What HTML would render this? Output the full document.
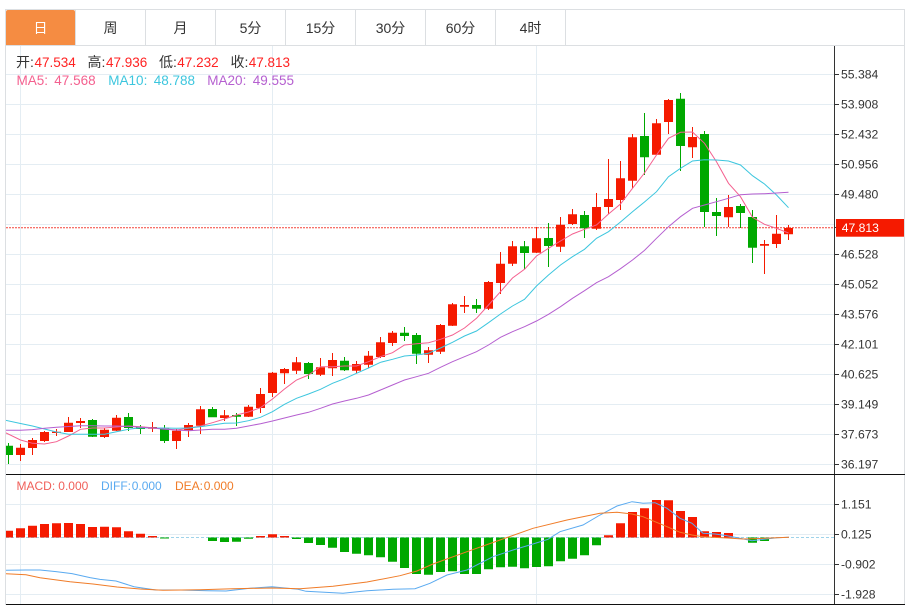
<!DOCTYPE html>
<html><head><meta charset="utf-8"><style>
html,body{margin:0;padding:0;background:#fff;width:910px;height:605px;overflow:hidden}
svg{position:absolute;left:0;top:0;display:block}
text{font-family:"Liberation Sans","Noto Sans CJK SC",sans-serif}
</style></head><body>
<svg width="910" height="605" viewBox="0 0 910 605" xmlns="http://www.w3.org/2000/svg">
<defs><clipPath id="c"><rect x="6" y="46" width="828" height="558"/></clipPath></defs>
<!-- frame -->
<path d="M5.5 605V9.5H904.5V605M6 45.5H904M145.5 10V45M215.5 10V45M285.5 10V45M355.5 10V45M425.5 10V45M495.5 10V45M565.5 10V45M75.5 10V45" fill="none" stroke="#dcdfe2"/>
<path d="M6 45V12a2 2 0 0 1 2-2H73a2 2 0 0 1 2 2V45z" fill="#f58c42"/>
<g font-size="14" fill="#333" text-anchor="middle">
<text x="40.5" y="33" fill="#fff">日</text><text x="110.5" y="33">周</text><text x="180.5" y="33">月</text><text x="250.5" y="33">5分</text><text x="320.5" y="33">15分</text><text x="390.5" y="33">30分</text><text x="460.5" y="33">60分</text><text x="530.5" y="33">4时</text>
</g>
<!-- grid -->
<path d="M6 74.5H834M6 104.5H834M6 134.5H834M6 164.5H834M6 194.5H834M6 224.5H834M6 254.5H834M6 284.5H834M6 314.5H834M6 344.5H834M6 374.5H834M6 404.5H834M6 434.5H834M6 464.5H834M6 504.5H834M6 534.5H834M6 564.5H834M6 594.5H834M20.5 46V604M272.5 46V604M536.5 46V604" fill="none" stroke="#e4edf3"/>
<g clip-path="url(#c)">
<path d="M6 227.7H834" stroke="#f4433a" stroke-width="1" stroke-dasharray="2 1"/>
<path d="M6 537.5H834" stroke="#9fd3ea" stroke-dasharray="3 2"/>
<!-- red wicks -->
<path fill="none" stroke="#f51a00" d="M20.5 444V461M32.5 438V455M44.5 431V442M56.5 429V436M68.5 417V432M80.5 418V428M104.5 428V438M116.5 415V431M152.5 422V432M176.5 429V449M188.5 423V437M200.5 406V434M224.5 410V421M248.5 405V417M260.5 388V413M272.5 372V397M284.5 368V384M296.5 357V374M320.5 358V376M332.5 353V376M356.5 361V373M368.5 351V368M380.5 337V358M392.5 331V346M428.5 347V363M440.5 324V354M452.5 303V326M464.5 296V313M488.5 281V310M500.5 252V294M512.5 241V266M536.5 227V253M560.5 217V252M572.5 209V225M596.5 193V230M608.5 159V214M620.5 161V210M632.5 134V188M656.5 119V155M668.5 99V134M692.5 127V158M728.5 195V227M764.5 240V274M776.5 215V248M788.5 225V240"/>
<!-- green wicks -->
<path fill="none" stroke="#00a800" d="M8.5 443V464M92.5 419V437M128.5 413V431M140.5 425V434M164.5 425V443M212.5 407V417M236.5 413V426M308.5 362V379M344.5 357V371M404.5 327V341M416.5 333V364M476.5 299V313M524.5 241V269M548.5 223V267M584.5 211V238M644.5 113V175M680.5 93V171M704.5 131V227M716.5 198V236M740.5 204V228M752.5 210V263"/>
<!-- red bodies -->
<path fill="#f51a00" d="M16 447.7h9V455h-9zM28 440h9v8h-9zM40 432h9v9h-9zM52 431.7h9v1.3h-9zM64 422.7h9v9.3h-9zM76 421h9v2h-9zM100 429.7h9V437h-9zM112 417.7h9v13h-9zM148 427h9v1.7h-9zM172 430.7h9V441h-9zM184 425h9v5.3h-9zM196 409.3h9v16.4h-9zM220 415.3h9v2.7h-9zM244 406.7h9v10h-9zM256 394h9v14h-9zM268 372.7h9V393h-9zM280 369h9v4.3h-9zM292 362.3h9v8.4h-9zM316 367.3h9v7.4h-9zM328 360h9v8.3h-9zM352 364h9v6.7h-9zM364 355.7h9v9h-9zM376 342.3h9V357h-9zM388 332.7h9V343h-9zM424 350.3h9v4.4h-9zM436 325h9v26.7h-9zM448 304.3h9v21.4h-9zM460 305h9v1.7h-9zM484 282h9v26.7h-9zM496 263.7h9V283h-9zM508 246.3h9v17.4h-9zM532 238.3h9v14.4h-9zM556 224.7h9v22h-9zM568 214.3h9v9.7h-9zM592 207h9v21.7h-9zM604 199h9v8h-9zM616 178.3h9V200h-9zM628 137.3h9v43.4h-9zM652 123.3h9v31.4h-9zM664 100h9v22h-9zM688 137h9v10.3h-9zM724 207h9v10.3h-9zM760 244h9v1.7h-9zM772 233.7h9V244h-9zM784 228h9v6.3h-9z"/>
<!-- green bodies -->
<path fill="#00a800" d="M4 445.7h9V455H4zM88 420h9v16.7h-9zM124 417h9v11h-9zM136 426.7h9v2.3h-9zM160 427.7h9V441h-9zM208 409h9v8.3h-9zM232 415h9v1.7h-9zM304 363h9v11h-9zM340 360.7h9v9.6h-9zM400 332.7h9v3.3h-9zM412 335h9v18.7h-9zM472 305h9v3.7h-9zM520 246.3h9v6.7h-9zM544 238h9v8h-9zM580 215h9v13.3h-9zM640 136h9v21.3h-9zM676 98.7h9V146h-9zM700 134h9v78h-9zM712 212h9v4h-9zM736 206h9v7h-9zM748 217h9v30.7h-9z"/>
<!-- MACD bars -->
<path fill="#f51a00" d="M4 530.7h9v6.8H4zM16 528.3h9v9.2h-9zM28 525.7h9v11.8h-9zM40 524h9v13.5h-9zM52 523.3h9v14.2h-9zM64 523h9v14.5h-9zM76 524h9v13.5h-9zM88 527h9v10.5h-9zM100 526.7h9v10.8h-9zM112 527.3h9v10.2h-9zM124 531.3h9v6.2h-9zM136 533.7h9v3.8h-9zM148 536h9v1.5h-9zM256 536h9v1.5h-9zM268 534.3h9v3.2h-9zM280 536h9v1.5h-9zM604 535.3h9v2.2h-9zM616 523.3h9v14.2h-9zM628 512h9v25.5h-9zM640 508.3h9v29.2h-9zM652 500h9v37.5h-9zM664 500.3h9v37.2h-9zM676 511h9v26.5h-9zM688 517h9v20.5h-9zM700 531.3h9v6.2h-9zM712 532h9v5.5h-9zM724 533h9v4.5h-9z"/>
<path fill="#00a800" d="M160 537.5h9v1h-9zM208 537.5h9V541h-9zM220 537.5h9V542h-9zM232 537.5h9v4.2h-9zM244 537.5h9v1.2h-9zM292 537.5h9V539h-9zM304 537.5h9V543h-9zM316 537.5h9V545h-9zM328 537.5h9v10.2h-9zM340 537.5h9V552h-9zM352 537.5h9v16.2h-9zM364 537.5h9v17.8h-9zM376 537.5h9v19.8h-9zM388 537.5h9v24.2h-9zM400 537.5h9V568h-9zM412 537.5h9V574h-9zM424 537.5h9v37.2h-9zM436 537.5h9V572h-9zM448 537.5h9v33.8h-9zM460 537.5h9V574h-9zM472 537.5h9V574h-9zM484 537.5h9v31.8h-9zM496 537.5h9v29.8h-9zM508 537.5h9v29.2h-9zM520 537.5h9v30.8h-9zM532 537.5h9V567h-9zM544 537.5h9v28.8h-9zM556 537.5h9v23.8h-9zM568 537.5h9v21.2h-9zM580 537.5h9v17.8h-9zM592 537.5h9v7.8h-9zM748 537.5h9v5.2h-9zM760 537.5h9v3.5h-9z"/>
<!-- MA5 -->
<polyline fill="none" stroke="#f4608f" points="4,432 20.5,440 32.5,443.3 44.5,444 56.5,441.7 68.5,436 80.5,429.3 92.5,428 104.5,428 116.5,427 128.5,426 140.5,426.7 152.5,427.7 164.5,428.7 176.5,430 188.5,428.3 200.5,426 212.5,422.7 224.5,419 236.5,415 248.5,412 260.5,407.7 272.5,399 284.5,389 296.5,380 308.5,375 320.5,366.7 332.5,366.7 344.5,366 356.5,366 368.5,361.7 380.5,356.7 392.5,352.7 404.5,345 416.5,343.7 428.5,342.7 440.5,339.3 452.5,335 464.5,328 476.5,318.3 488.5,305 500.5,291.7 512.5,278 524.5,269.3 536.5,256 548.5,248.3 560.5,241 572.5,234 584.5,229.3 596.5,225 608.5,214 620.5,204 632.5,188.3 644.5,173 656.5,155 668.5,138.3 680.5,132.3 692.5,132 704.5,143.3 716.5,161.7 728.5,183.3 740.5,196.7 752.5,217.3 764.5,224.3 776.5,228.3 788.5,233"/>
<!-- MA10 -->
<polyline fill="none" stroke="#3cc6de" points="4,420 20.5,423.5 32.5,426 44.5,429 56.5,432 68.5,434.3 80.5,434.3 92.5,434.3 104.5,434.3 116.5,431.7 128.5,429.3 140.5,427.7 152.5,428 164.5,428 176.5,428.3 188.5,428 200.5,426.7 212.5,425 224.5,423.3 236.5,423 248.5,420.7 260.5,417.3 272.5,411.7 284.5,404.3 296.5,398.3 308.5,394 320.5,389.3 332.5,383.3 344.5,378.7 356.5,373.3 368.5,368 380.5,362.3 392.5,359.3 404.5,356 416.5,355 428.5,353.3 440.5,348 452.5,342.3 464.5,336 476.5,331 488.5,322.7 500.5,314 512.5,306 524.5,299.3 536.5,286 548.5,275 560.5,265 572.5,256.7 584.5,249.3 596.5,238.3 608.5,231.7 620.5,222 632.5,211.7 644.5,202 656.5,191.7 668.5,176.7 680.5,168.3 692.5,161 704.5,159.7 716.5,160 728.5,161 740.5,165 752.5,175.7 764.5,184 776.5,195 788.5,207.7"/>
<!-- MA20 -->
<polyline fill="none" stroke="#b55fd0" points="4,430.3 20.5,430.3 32.5,429.6 44.5,428.3 56.5,427.3 68.5,426.5 80.5,425.7 92.5,425.8 104.5,426 116.5,426 128.5,426.4 140.5,427.3 152.5,428 164.5,429.3 176.5,430 188.5,430.7 200.5,430 212.5,429.3 224.5,429.3 236.5,428.3 248.5,426 260.5,423.7 272.5,421 284.5,418 296.5,415 308.5,412.3 320.5,408.3 332.5,404 344.5,401 356.5,398.3 368.5,395 380.5,390 392.5,385 404.5,380 416.5,376.7 428.5,373.3 440.5,367.3 452.5,361.7 464.5,356.7 476.5,351.7 488.5,345 500.5,337.3 512.5,331.7 524.5,326.7 536.5,321 548.5,314.3 560.5,306.7 572.5,298.3 584.5,290.7 596.5,282.7 608.5,276.7 620.5,268.7 632.5,260 644.5,250.4 656.5,238.3 668.5,226.7 680.5,216.7 692.5,208.3 704.5,205 716.5,201.7 728.5,198.3 740.5,194.7 752.5,194 764.5,193.7 776.5,193 788.5,192.3"/>
<!-- DIFF -->
<polyline fill="none" stroke="#5aaaf0" points="4,570.3 26,570 40,570 56,571.6 72,573.6 90,577.6 100,579.4 116,581 134,586.7 156,590 180,590 208,590.7 226,591 250,588.3 272,586.7 298,589.3 306,591.3 343,593.3 367,590.7 393,589.3 415,588.7 430,583.3 447,575 467,570 493,556.7 513,550 533,544 548,539.3 560,531.7 583,525 600,515 617,506 632,501.7 643,503.3 655,502.7 667,508.3 680,518.3 692,523.3 703,533.3 715,534 727,535.7 740,538.3 752,540.7 764,539.3 777,537.7 789,537.3"/>
<!-- DEA -->
<polyline fill="none" stroke="#f07c28" points="4,573.7 26,574.7 40,577.7 70,581.7 93,584 117,587 140,589 163,590.3 200,589.7 233,588.7 272,588 300,588.7 333,586.3 367,582 400,575.7 417,571 433,564 467,551.7 500,540 533,528.3 567,520 600,513.3 617,512.3 632,514 643,516.7 655,521.7 667,526.7 680,532.3 692,535 703,536.7 727,538 743,539 764,538.3 789,537.3"/>
</g>
<!-- axis -->
<path d="M834.5 46V604" stroke="#333" stroke-width="1" fill="none"/>
<path d="M834 74.5h5M834 104.5h5M834 134.5h5M834 164.5h5M834 194.5h5M834 227.5h2M834 254.5h5M834 284.5h5M834 314.5h5M834 344.5h5M834 374.5h5M834 404.5h5M834 434.5h5M834 464.5h5M834 504.5h5M834 534.5h5M834 564.5h5M834 594.5h5" stroke="#333" fill="none"/>
<path d="M6 474.5H905M6 604.5H905" stroke="#111" fill="none"/>
<g font-size="12.2" fill="#333">
<text x="841" y="78.5">55.384</text><text x="841" y="108.5">53.908</text><text x="841" y="138.5">52.432</text><text x="841" y="168.5">50.956</text><text x="841" y="198.5">49.480</text><text x="841" y="258.5">46.528</text><text x="841" y="288.5">45.052</text><text x="841" y="318.5">43.576</text><text x="841" y="348.5">42.101</text><text x="841" y="378.5">40.625</text><text x="841" y="408.5">39.149</text><text x="841" y="438.5">37.673</text><text x="841" y="468.5">36.197</text>
<text x="841" y="508.5">1.151</text><text x="841" y="538.5">0.125</text><text x="841" y="568.5">-0.902</text><text x="841" y="598.5">-1.928</text>
</g>
<rect x="836" y="219" width="68" height="17.7" fill="#f51a00"/>
<text x="841.7" y="232" font-size="12.2" fill="#fff">47.813</text>
<!-- legends -->
<g font-size="14" fill="#333">
<text x="16" y="67">开:</text><text x="87.5" y="67">高:</text><text x="159" y="67">低:</text><text x="230.5" y="67">收:</text>
</g>
<g font-size="13.5" fill="#f22">
<text x="34.5" y="67">47.534</text><text x="106" y="67">47.936</text><text x="177.3" y="67">47.232</text><text x="248.7" y="67">47.813</text>
</g>
<g font-size="13.5">
<text x="16.5" y="85" fill="#f4608f">MA5:</text><text x="54.3" y="85" fill="#f4608f">47.568</text>
<text x="108.3" y="85" fill="#3cc6de">MA10:</text><text x="153.7" y="85" fill="#3cc6de">48.788</text>
<text x="207.3" y="85" fill="#b55fd0">MA20:</text><text x="252.7" y="85" fill="#b55fd0">49.555</text>
</g>
<g font-size="12">
<text x="16.5" y="490" fill="#f0605a">MACD:</text><text x="58.3" y="490" fill="#f0605a">0.000</text>
<text x="101" y="490" fill="#5aaaf0">DIFF:</text><text x="131.7" y="490" fill="#5aaaf0">0.000</text>
<text x="175" y="490" fill="#f07c28">DEA:</text><text x="203.7" y="490" fill="#f07c28">0.000</text>
</g>
</svg>
</body></html>
